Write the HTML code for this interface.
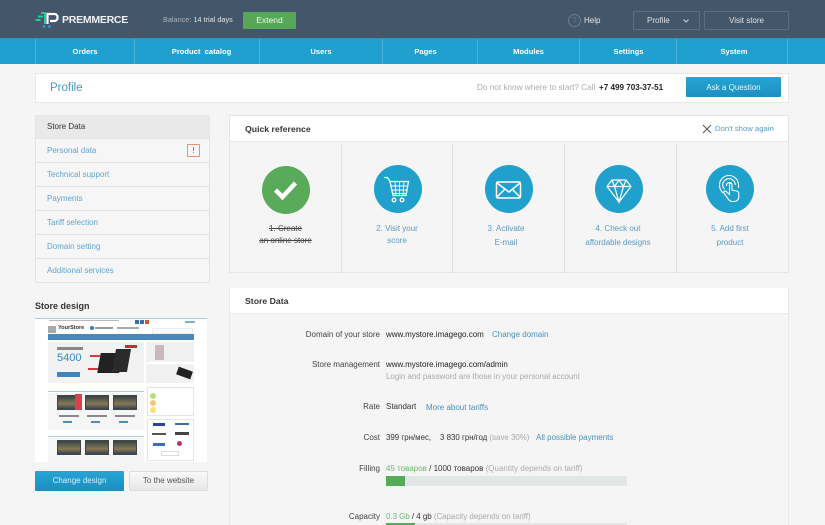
<!DOCTYPE html>
<html><head><meta charset="utf-8"><style>
*{box-sizing:border-box}
html,body{margin:0;padding:0}
body{width:825px;height:525px;overflow:hidden;background:#f5f5f5;position:relative;font-family:"Liberation Sans",sans-serif;font-size:8px;color:#333}
.a{position:absolute;white-space:nowrap}
.w{filter:blur(.35px);position:absolute;left:0;top:0;width:825px;height:525px;overflow:hidden}
a,.l{color:#4a90bd}
.nav{position:absolute;top:39px;height:25px;line-height:25px;text-align:center;color:#fff;font-weight:bold;border-left:1px solid #4db2da;font-size:7.6px}
.side{position:absolute;left:35px;width:175px;height:24px;line-height:23px;padding-left:11px;border:1px solid #e3e3e3;border-top:0;color:#62a4cf;background:#f6f6f6;font-size:8px}
.cell{position:absolute;top:143px;height:130px;border-right:1px solid #e2e2e2;text-align:center;color:#5c9bc4;font-size:8px;line-height:14px}
.c{position:absolute;left:50%;top:22px;width:48px;height:48px;border-radius:50%;background:#20a0cd}
.c svg{position:absolute;left:0;top:0}
.t{position:absolute;left:0;right:0;top:79px}
.r{position:absolute;text-align:right;left:240px;width:140px;color:#444;font-size:8px}
.v{position:absolute;left:386px;color:#333;white-space:nowrap;font-size:8px}
.g{color:#aaa}.gr{color:#66bb6a}
.b{position:absolute;background:#fff}
.tv{position:absolute;width:24px;height:15px;background:linear-gradient(#344,#875 60%,#345);border:1px solid #444}
</style></head><body><div class="w">

<div class="a" style="left:0;top:0;width:825px;height:38px;background:#44566a"></div>
<svg class="a" style="left:34px;top:10px" width="26" height="19" viewBox="0 0 26 19" fill="none">
<path d="M1.500 10h5M4 6.500h5M7 3h4v11" stroke="#2fd0a5" stroke-width="1.800"/>
<path d="M13.500 14V4h7a3 3 0 0 1 3 3v1a3 3 0 0 1-3 3h-4.500" stroke="#fff" stroke-width="2.200"/>
<circle cx="10" cy="16.500" r="1.300" fill="#2a9fe0"/><circle cx="15.500" cy="16.500" r="1.300" fill="#2a9fe0"/>
</svg>
<div class="a" style="left:62px;top:13px;font-size:10.500px;letter-spacing:-.25px;font-weight:bold;color:#eef1f3;line-height:14px">PREMMERCE</div>
<div class="a" style="left:163px;top:15px;line-height:10px;font-size:7.300px;color:#a9b3bc">Balance: <span style="color:#dfe3e6">14 trial days</span></div>
<div class="a" style="left:243px;top:12px;width:53px;height:17px;background:#56a857;border-radius:1px;color:#f1f7f1;text-align:center;line-height:17px;font-size:8.500px">Extend</div>
<div class="a" style="left:568px;top:14px;width:13px;height:13px;border:1px solid #6d7d8c;border-radius:50%;color:#6d7d8c;text-align:center;line-height:11px;font-size:8px">?</div>
<div class="a" style="left:584px;top:16px;line-height:10px;color:#e3e7ea;font-size:8px">Help</div>
<div class="a" style="left:633px;top:11px;width:67px;height:19px;border:1px solid #5c6d7d;border-radius:1px"></div>
<div class="a" style="left:647px;top:16px;line-height:10px;color:#dfe3e6;font-size:8px">Profile</div>
<svg class="a" style="left:682px;top:18px" width="8" height="6"><path d="M1.500 1.500L4 4l2.500-2.500" stroke="#cfd5da" fill="none"/></svg>
<div class="a" style="left:704px;top:11px;width:85px;height:19px;border:1px solid #5c6d7d;border-radius:1px;color:#dfe3e6;text-align:center;line-height:17px;font-size:8px">Visit store</div>

<div class="a" style="left:0;top:38px;width:825px;height:26px;background:#20a0cf;border-top:1px solid #2a94bd"></div>
<div class="nav" style="left:35px;width:99px">Orders</div>
<div class="nav" style="left:134px;width:125px;padding-left:9px">Product&nbsp; catalog</div>
<div class="nav" style="left:259px;width:123px">Users</div>
<div class="nav" style="left:382px;width:96px;padding-right:10px">Pages</div>
<div class="nav" style="left:477px;width:102px">Modules</div>
<div class="nav" style="left:579px;width:98px">Settings</div>
<div class="nav" style="left:676px;width:112px;border-right:1px solid #4db2da;padding-left:4px">System</div>

<div class="b" style="left:35px;top:73px;width:754px;height:30px;border:1px solid #e8e8e8"></div>
<div class="a" style="left:50px;top:81px;font-size:11.500px;line-height:15px;color:#4a95bf">Profile</div>
<div class="a" style="left:477px;top:82px;line-height:11px;color:#adadad;font-size:8.200px">Do not know where to start? Call</div>
<div class="a" style="left:599px;top:82px;line-height:11px;color:#222;font-weight:bold;font-size:8.100px">+7 499 703-37-51</div>
<div class="a" style="left:686px;top:77px;width:95px;height:20px;background:linear-gradient(#25a5d3,#1b8fc0);border-radius:1px;color:#eaf6fb;text-align:center;line-height:21px;font-size:8px">Ask a Question</div>

<div class="a" style="left:35px;top:115px;width:175px;height:24px;background:#e9e9e9;border:1px solid #e5e5e5;border-radius:2px 2px 0 0;line-height:22px;padding-left:11px;color:#333;font-size:8px">Store Data</div>
<div class="side" style="top:139px">Personal data</div>
<div class="side" style="top:163px">Technical support</div>
<div class="side" style="top:187px">Payments</div>
<div class="side" style="top:211px">Tariff selection</div>
<div class="side" style="top:235px">Domain setting</div>
<div class="side" style="top:259px;border-radius:0 0 2px 2px">Additional services</div>
<div class="a" style="left:187px;top:144px;width:13px;height:13px;border:1px solid #f0906e;border-radius:1px;color:#ef6f45;text-align:center;line-height:11px;font-weight:bold;font-size:8.500px">!</div>

<div class="a" style="left:35px;top:300px;line-height:12px;font-weight:bold;color:#333;font-size:9px">Store design</div>
<div class="b" style="left:35px;top:318px;width:172px;height:144px;overflow:hidden;border-top:1px solid #a9cde6">
 <div class="a" style="left:14px;top:1px;width:70px;height:1px;background:#bbb"></div>
 <div class="a" style="left:100px;top:1px;width:4px;height:4px;background:#3a70a8"></div>
 <div class="a" style="left:105px;top:1px;width:4px;height:4px;background:#3a70a8"></div>
 <div class="a" style="left:110px;top:1px;width:4px;height:4px;background:#cc5a3a"></div>
 <div class="a" style="left:150px;top:2px;width:10px;height:2px;background:#7fb0d0"></div>
 <div class="a" style="left:13px;top:7px;width:8px;height:7px;background:#aaa"></div>
 <div class="a" style="left:23px;top:6px;font-size:5.500px;font-weight:bold;color:#333;line-height:7px">YourStore</div>
 <div class="a" style="left:55px;top:7px;width:4px;height:4px;border-radius:50%;background:#2f7fc0"></div>
 <div class="a" style="left:60px;top:8px;width:18px;height:2px;background:#999"></div>
 <div class="a" style="left:82px;top:8px;width:22px;height:2px;background:#aaa"></div>
 <div class="a" style="left:117px;top:9px;width:41px;height:6px;border:1px solid #eee;background:#fafafa"></div>
 <div class="a" style="left:13px;top:15px;width:146px;height:6px;background:#4789bd"></div>
 <div class="a" style="left:13px;top:23px;width:96px;height:41px;background:#f2f2f2"></div>
 <div class="a" style="left:22px;top:33px;font-size:11px;color:#2a8dc0;line-height:13px">5400</div>
 <div class="a" style="left:22px;top:28px;width:26px;height:3px;background:#888"></div>
 <div class="a" style="left:22px;top:53px;width:23px;height:5px;background:#3f84bd"></div>
 <div class="a" style="left:64px;top:34px;width:22px;height:20px;background:#222;transform:skewX(-10deg)"></div>
 <div class="a" style="left:79px;top:30px;width:15px;height:23px;background:#2b2b2b;transform:skewX(-10deg)"></div>
 <div class="a" style="left:55px;top:36px;width:10px;height:2px;background:#d03a3a"></div>
 <div class="a" style="left:53px;top:49px;width:10px;height:2px;background:#d03a3a"></div>
 <div class="a" style="left:90px;top:26px;width:12px;height:3px;background:#b33"></div>
 <div class="a" style="left:111px;top:23px;width:48px;height:20px;background:#f1f1f1"></div>
 <div class="a" style="left:120px;top:26px;width:9px;height:15px;background:#c9b9bf"></div>
 <div class="a" style="left:111px;top:45px;width:48px;height:19px;background:#f1f1f1"></div>
 <div class="a" style="left:142px;top:50px;width:15px;height:8px;background:#222;transform:rotate(20deg)"></div>
 <div class="a" style="left:13px;top:72px;width:96px;height:1px;background:#a9cde6"></div>
 <div class="a" style="left:13px;top:74px;width:96px;height:37px;background:#f6f6f6"></div>
 <div class="tv" style="left:22px;top:76px"></div>
 <div class="tv" style="left:50px;top:76px"></div>
 <div class="tv" style="left:78px;top:76px"></div>
 <div class="a" style="left:40px;top:75px;width:7px;height:16px;background:#d8434a"></div>
 <div class="a" style="left:24px;top:96px;width:20px;height:2px;background:#888"></div>
 <div class="a" style="left:52px;top:96px;width:20px;height:2px;background:#888"></div>
 <div class="a" style="left:80px;top:96px;width:20px;height:2px;background:#888"></div>
 <div class="a" style="left:28px;top:102px;width:9px;height:2px;background:#4a90bd"></div>
 <div class="a" style="left:56px;top:102px;width:9px;height:2px;background:#4a90bd"></div>
 <div class="a" style="left:84px;top:102px;width:9px;height:2px;background:#4a90bd"></div>
 <div class="a" style="left:13px;top:117px;width:96px;height:1px;background:#a9cde6"></div>
 <div class="a" style="left:13px;top:119px;width:96px;height:25px;background:#f6f6f6"></div>
 <div class="tv" style="left:22px;top:121px"></div>
 <div class="tv" style="left:50px;top:121px"></div>
 <div class="tv" style="left:78px;top:121px"></div>
 <div class="a" style="left:112px;top:68px;width:47px;height:29px;background:#fff;border:1px solid #e5e5e5"></div>
 <div class="a" style="left:115px;top:74px;width:6px;height:6px;border-radius:50%;background:#b7dd7d"></div>
 <div class="a" style="left:115px;top:81px;width:6px;height:6px;border-radius:50%;background:#f2c77d"></div>
 <div class="a" style="left:115px;top:88px;width:6px;height:6px;border-radius:50%;background:#f5e07a"></div>
 <div class="a" style="left:112px;top:100px;width:47px;height:42px;background:#fff;border:1px solid #e5e5e5"></div>
 <div class="a" style="left:118px;top:104px;width:12px;height:3px;background:#26459a"></div>
 <div class="a" style="left:140px;top:104px;width:14px;height:2px;background:#3a6fa5"></div>
 <div class="a" style="left:117px;top:114px;width:14px;height:2px;background:#555"></div>
 <div class="a" style="left:140px;top:113px;width:14px;height:3px;background:#444"></div>
 <div class="a" style="left:118px;top:124px;width:12px;height:3px;background:#3a6fc0"></div>
 <div class="a" style="left:142px;top:122px;width:5px;height:5px;border-radius:50%;background:#b83a5a"></div>
 <div class="a" style="left:126px;top:132px;width:18px;height:5px;border:1px solid #ddd"></div>
</div>
<div class="a" style="left:35px;top:471px;width:89px;height:20px;background:linear-gradient(#25a5d3,#1b8fc0);border-radius:1px;color:#d7eef7;text-align:center;line-height:20px;font-size:8px">Change design</div>
<div class="a" style="left:129px;top:471px;width:79px;height:20px;background:linear-gradient(#fafafa,#e8e8e8);border:1px solid #ddd;border-radius:1px;color:#555;text-align:center;line-height:18px;font-size:8px">To the website</div>

<div class="a" style="left:229px;top:115px;width:560px;height:158px;border:1px solid #e5e5e5;background:#f5f5f5"></div>
<div class="b" style="left:230px;top:116px;width:558px;height:26px;border-bottom:1px solid #e8e8e8"></div>
<div class="a" style="left:245px;top:123px;line-height:12px;font-weight:bold;color:#333;font-size:8.700px">Quick reference</div>
<svg class="a" style="left:702px;top:124px" width="10" height="10"><path d="M1 1l8 8M9 1l-8 8" stroke="#555" fill="none"/></svg>
<div class="a" style="left:715px;top:123px;line-height:11px;color:#5c9bc4;font-size:7.700px">Don't show again</div>

<div class="cell" style="left:230px;width:112px;color:#444"><div class="c" style="top:23px;background:#5aaa5c;margin-left:-23.500px">
<svg width="48" height="48"><path d="M13.500 24l7 7 13-14" stroke="#fff" stroke-width="4.500" fill="none"/></svg></div>
<div class="t" style="top:80px;line-height:12px"><s>1. Create</s><br><s>an online store</s></div></div>

<div class="cell" style="left:342px;width:111px"><div class="c" style="margin-left:-23.500px">
<svg width="48" height="48" fill="none" stroke="#fff" stroke-width="1.300"><path d="M10 12.500h3.500l2.500 4h18.500l-2.500 14H19l-3-14"/><path d="M17 21h16.500M18 25h15M18.500 28.500h13.500M21 17l1 13.500M25.500 17v13.500M30 17l-1 13.500" stroke-width=".9"/><circle cx="20" cy="35" r="1.800"/><circle cx="28" cy="35" r="1.800"/></svg></div>
<div class="t" style="top:80px;line-height:12px">2. Visit your<br>score</div></div>

<div class="cell" style="left:453px;width:112px"><div class="c" style="margin-left:-24px">
<svg width="48" height="48" fill="none" stroke="#fff" stroke-width="1.500"><rect x="11.500" y="17" width="24" height="16" rx="1.500"/><path d="M12 18l12 9 11-9M12 32l8-8M35 32l-8-8"/></svg></div>
<div class="t" style="right:5px">3. Activate<br>E-mail</div></div>

<div class="cell" style="left:565px;width:112px"><div class="c" style="margin-left:-26px">
<svg width="48" height="48" fill="none" stroke="#fff" stroke-width="1.200"><path d="M17 15h14l5 6.500L24 37 12 21.500z"/><path d="M12 21.500h24M17 15l2.500 6.500L24 37l4.500-15.500L31 15M19.500 21.500L24 15l4.500 6.500"/></svg></div>
<div class="t" style="right:5px">4. Check out<br>affordable designs</div></div>

<div class="cell" style="left:677px;width:111px;border-right:0"><div class="c" style="margin-left:-26.500px">
<svg width="48" height="48" fill="none" stroke="#fff" stroke-width="1.100"><path d="M17 28c-2-2-3.500-4.500-3.500-8a9.500 9.500 0 0 1 19 0v3"/><path d="M18.500 24c-1-1-1.800-2.500-1.800-4a6.300 6.300 0 0 1 12.600 0"/><path d="M20.500 21a3 3 0 0 1 5.500-2"/><path d="M23.500 19.500c0-1.600 2.500-1.600 2.500 0v5.500l4.500 1c1.500.3 2.300 1.300 2.300 2.800v3.200c0 2.500-2 4.500-4.500 4.500h-1.800c-1.800 0-3-.8-4-2l-4.500-6.500c-1-1.500.8-2.800 2.300-1.500l3.200 3z" fill="#20a0cd"/></svg></div>
<div class="t" style="right:5px">5. Add first<br>product</div></div>

<div class="a" style="left:229px;top:288px;width:560px;height:240px;border:1px solid #e8e8e8;background:#f5f5f5"></div>
<div class="b" style="left:230px;top:288px;width:558px;height:26px;border-bottom:1px solid #ececec"></div>
<div class="a" style="left:245px;top:295px;line-height:12px;font-weight:bold;color:#333;font-size:8.700px">Store Data</div>

<div class="r" style="top:329px;line-height:11px">Domain of your store</div>
<div class="v" style="top:329px;line-height:11px"><span style="color:#222">www.mystore.imagego.com</span><span class="l" style="position:absolute;left:106px">Change domain</span></div>
<div class="r" style="top:359px;line-height:11px">Store management</div>
<div class="v" style="top:359px;line-height:11px;color:#222">www.mystore.imagego.com/admin</div>
<div class="v g" style="top:371px;line-height:11px;font-size:7.900px">Login and password are those in your personal account</div>
<div class="r" style="top:401px;line-height:11px">Rate</div>
<div class="v" style="top:401px;line-height:11px">Standart<span class="l" style="position:absolute;left:40px;top:1px">More about tariffs</span></div>
<div class="r" style="top:432px;line-height:11px">Cost</div>
<div class="v" style="top:432px;line-height:11px;font-size:7.900px">399 грн/мес,<span style="position:absolute;left:54px">3 830 грн/год <span class="g">(save 30%)</span></span><span class="l" style="position:absolute;left:150px;font-size:8px">All possible payments</span></div>
<div class="r" style="top:463px;line-height:11px">Filling</div>
<div class="v" style="top:463px;line-height:11px;font-size:8px"><span class="gr">45 товаров</span> / 1000 товаров <span class="g">(Quantity depends on tariff)</span></div>
<div class="a" style="left:386px;top:476px;width:241px;height:10px;background:#e3e6e7"></div>
<div class="a" style="left:386px;top:476px;width:19px;height:10px;background:#56ab58"></div>
<div class="r" style="top:511px;line-height:11px">Capacity</div>
<div class="v" style="top:511px;line-height:11px;font-size:7.900px"><span class="gr">0.3 Gb</span> / 4 gb <span class="g">(Capacity depends on tariff)</span></div>
<div class="a" style="left:386px;top:523px;width:241px;height:2px;background:#e3e6e7"></div>
<div class="a" style="left:386px;top:523px;width:29px;height:2px;background:#56ab58"></div>
</div>
</body></html>
